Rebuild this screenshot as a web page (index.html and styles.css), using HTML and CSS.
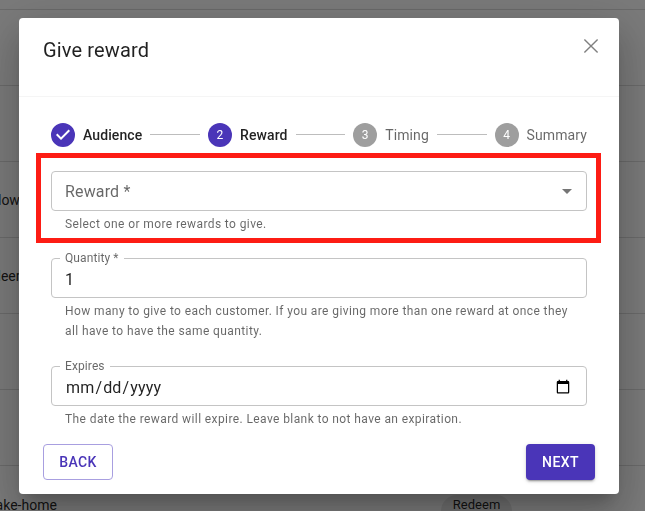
FILE: index.html
```html
<!DOCTYPE html>
<html lang="en">
<head>
<meta charset="utf-8">
<title>Give reward</title>
<link rel="stylesheet" href="styles.css">
</head>
<body>
<main class="page">
  <div class="row"></div>
  <div class="row"></div>
  <div class="row"><span class="cell-text offset-low">Follow</span></div>
  <div class="row"><span class="cell-text offset-bee">Redeem</span></div>
  <div class="row"></div>
  <div class="row"></div>
  <div class="row row-last"><span class="cell-text offset-take">Take-home</span><span class="chip">Redeem</span></div>
</main>
<div class="backdrop"></div>
<section class="dialog">
  <header class="dialog-head">
    <h1 class="dialog-title">Give reward</h1>
    <svg class="close" viewBox="0 0 24 24" width="24" height="24"><path d="M5.4 5.4 18.6 18.6M18.6 5.4 5.4 18.6"/></svg>
  </header>
  <div class="dialog-body">
    <ol class="stepper">
      <li class="step done">
        <svg class="step-check" viewBox="0 0 24 24" width="24" height="24"><path d="M12 0a12 12 0 1 0 0 24 12 12 0 0 0 0-24zm-2 17-5-5 1.41-1.41L10 14.17l7.59-7.59L19 8l-9 9z"/></svg>
        <span class="step-label">Audience</span>
      </li>
      <li class="connector"></li>
      <li class="step current">
        <span class="step-num">2</span>
        <span class="step-label">Reward</span>
      </li>
      <li class="connector"></li>
      <li class="step">
        <span class="step-num">3</span>
        <span class="step-label">Timing</span>
      </li>
      <li class="connector"></li>
      <li class="step">
        <span class="step-num">4</span>
        <span class="step-label">Summary</span>
      </li>
    </ol>
    <div class="field field-first">
      <div class="outline select-box">
        <span class="placeholder">Reward *</span>
        <svg class="caret" viewBox="0 0 24 24" width="24" height="24"><path d="M7 10l5 5 5-5z"/></svg>
      </div>
      <p class="helper">Select one or more rewards to give.</p>
    </div>
    <div class="field field-qty">
      <fieldset class="outline notched">
        <legend class="notch">Quantity *</legend>
        <span class="value">1</span>
      </fieldset>
      <p class="helper">How many to give to each customer. If you are giving more than one reward at once they all have to have the same quantity.</p>
    </div>
    <div class="field field-exp">
      <fieldset class="outline notched">
        <legend class="notch">Expires</legend>
        <input class="date" type="date" aria-label="Expires">
      </fieldset>
      <p class="helper">The date the reward will expire. Leave blank to not have an expiration.</p>
    </div>
  </div>
  <footer class="dialog-foot">
    <button class="btn btn-back" type="button">Back</button>
    <button class="btn btn-next" type="button">Next</button>
  </footer>
</section>
<div class="highlight"></div>
</body>
</html>
```
FILE: styles.css
```css
* { box-sizing: border-box; }
html, body { margin: 0; height: 100%; overflow: hidden; }
body {
  font-family: Roboto, "Liberation Sans", sans-serif;
  background: #f5f5f5;
  color: rgba(0, 0, 0, .87);
}
.page { padding-top: 9px; }
.row {
  height: 76px;
  border-top: 1px solid #d4d4d4;
  position: relative;
  font-size: 14px;
  display: flex;
  align-items: center;
}
.cell-text { white-space: nowrap; line-height: 20px; }
.offset-low { margin-left: -21px; }
.offset-bee { margin-left: -23px; }
.row-last { align-items: flex-start; padding-top: 29px; }
.offset-take { margin-left: -12px; }
.chip {
  margin-left: 384px;
  padding: 0 12px;
  height: 32px;
  line-height: 20px;
  font-size: 13px;
  border-radius: 16px;
  background: #e0e0e0;
}
.backdrop { position: fixed; inset: 0; background: rgba(0, 0, 0, .5); }
.dialog {
  position: fixed;
  left: 19px;
  top: 18px;
  width: 600px;
  height: 476px;
  background: #fff;
  border-radius: 4px;
  box-shadow: 0 11px 15px -7px rgba(0,0,0,.2), 0 24px 38px 3px rgba(0,0,0,.14), 0 9px 46px 8px rgba(0,0,0,.12);
  display: flex;
  flex-direction: column;
  overflow: hidden;
}
.dialog-head {
  height: 79px;
  flex: none;
  padding: 20px 24px 0;
  border-bottom: 1px solid #f5f5f5;
  position: relative;
}
.dialog-title {
  margin: 0;
  font-size: 20px;
  line-height: 25px;
  font-weight: 400;
  letter-spacing: .15px;
}
.close {
  position: absolute;
  right: 16px;
  top: 16px;
  fill: none;
  stroke: #808080;
  stroke-width: 1.4;
}
.dialog-body { flex: 1; min-height: 0; overflow: hidden; padding: 26px 32px 0; }
.stepper {
  list-style: none;
  margin: 0;
  padding: 0;
  display: flex;
  align-items: center;
  height: 24px;
}
.step { display: flex; align-items: center; gap: 8px; flex: none; font-size: 14px; color: rgba(0,0,0,.6); letter-spacing: .1px; }
.step.done, .step.current { color: rgba(0,0,0,.87); font-weight: 500; }
.step-check { fill: #4a35b8; display: block; }
.step-num {
  width: 24px;
  height: 24px;
  border-radius: 50%;
  background: #9e9e9e;
  color: #fff;
  font-size: 12px;
  font-weight: 400;
  display: flex;
  align-items: center;
  justify-content: center;
}
.step.current .step-num { background: #4a35b8; }
.connector { flex: 1; height: 1px; background: #bdbdbd; margin: 0 8px; position: relative; top: -1px; }
.field { margin: 0; }
.field-first { margin-top: 24px; }
.field-qty { margin-top: 17px; }
.field-exp { margin-top: 18px; }
.outline {
  border: 1px solid #c4c4c4;
  border-radius: 4px;
  height: 40px;
  margin: 0;
  padding: 0 13px;
}
.select-box { display: flex; align-items: center; justify-content: space-between; padding-right: 7px; }
.placeholder { font-size: 16px; color: rgba(0,0,0,.6); letter-spacing: .15px; }
.caret { fill: #757575; display: block; }
.notched { position: relative; display: block; min-width: 0; height: 47px; }
.notch {
  font-size: 12px;
  line-height: 14px;
  color: rgba(0,0,0,.6);
  padding: 0 5px;
  margin-left: -5px;
  margin-top: 0;
  letter-spacing: .1px;
}
.value { display: block; font-size: 16px; line-height: 24px; letter-spacing: .15px; margin-top: 3px; }
.date {
  display: block;
  width: 100%;
  height: 24px;
  border: 0;
  padding: 0;
  margin: 2px 0 0;
  outline: 0;
  background: none;
  font: 400 16px Roboto, "Liberation Sans", sans-serif;
  letter-spacing: .15px;
  color: rgba(0,0,0,.87);
}
.helper {
  margin: 3px 14px 0;
  font-size: 12px;
  line-height: 20px;
  letter-spacing: .4px;
  color: rgba(0,0,0,.6);
}
.dialog-foot {
  flex: none;
  height: 64px;
  display: flex;
  justify-content: space-between;
  align-items: flex-start;
  padding: 14px 24px 0;
}
.btn {
  height: 36px;
  border-radius: 4px;
  font: 500 14px Roboto, "Liberation Sans", sans-serif;
  letter-spacing: .4px;
  text-transform: uppercase;
  padding: 0 16px;
  cursor: pointer;
}
.btn-back { background: #fff; color: #4a35b8; border: 1px solid #a89fe0; width: 70px; padding: 0; }
.btn-next { background: #4a35b8; color: #fff; border: 0; width: 69px; padding: 0; box-shadow: 0 3px 1px -2px rgba(0,0,0,.2), 0 2px 2px 0 rgba(0,0,0,.14), 0 1px 5px 0 rgba(0,0,0,.12); }
.highlight {
  position: fixed;
  left: 36px;
  top: 153px;
  width: 565px;
  height: 90px;
  border: 5px solid #fd1c14;
  pointer-events: none;
}
```
